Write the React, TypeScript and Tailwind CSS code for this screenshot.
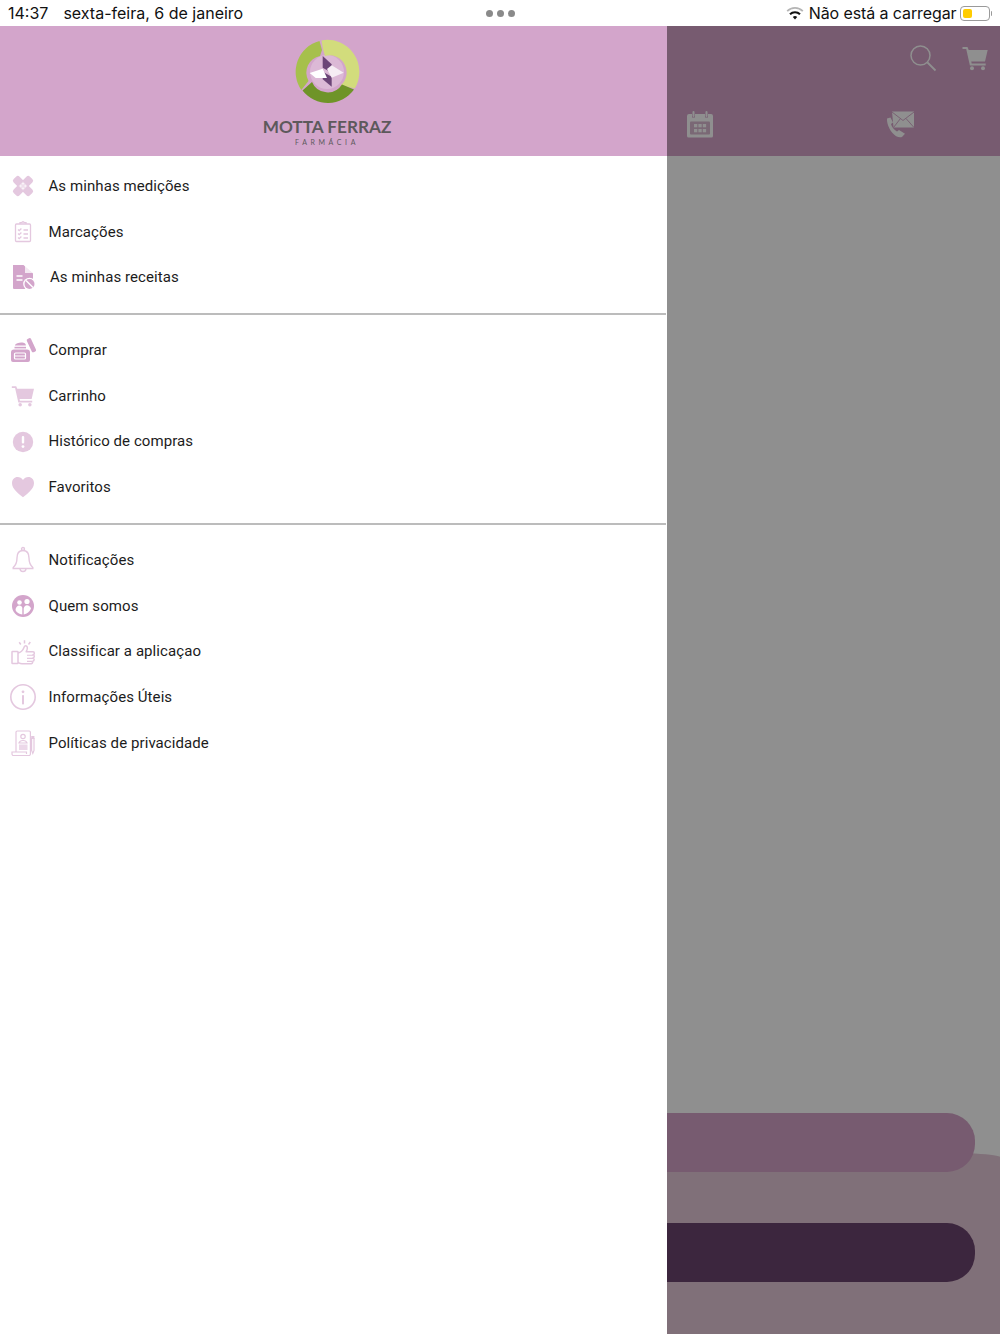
import type { ReactNode } from 'react';

const LIGHT = '#e4c8df';
const MID = '#d3a5cb';

function Icon({ children }: { children: ReactNode }) {
  return (
    <svg className="w-7 h-7 shrink-0 overflow-visible" viewBox="0 0 28 28">
      {children}
    </svg>
  );
}

const BandageIcon = () => (
  <Icon>
    <g fill={LIGHT}>
      <rect x="2.500" y="9.800" width="23" height="8.400" rx="2.500" transform="rotate(45 14 14)" />
      <rect x="2.500" y="9.800" width="23" height="8.400" rx="2.500" transform="rotate(-45 14 14)" />
    </g>
    <path d="M14 9.500l4.500 4.500-4.500 4.500-4.500-4.500z" fill="#efdfec" />
    <g fill="#fff">
      <circle cx="14" cy="11.800" r="0.800" />
      <circle cx="11.800" cy="14" r="0.800" />
      <circle cx="16.200" cy="14" r="0.800" />
      <circle cx="14" cy="16.200" r="0.800" />
    </g>
  </Icon>
);

const ClipboardIcon = () => (
  <Icon>
    <g fill="none" stroke={LIGHT} strokeWidth="1.300">
      <rect x="6.500" y="6" width="15" height="17.500" rx="1" />
      <path d="M11 6V4.600h2a1 1 0 0 1 2 0h2V6" />
      <path d="M9 11.500l1.200 1.200 2.200-2.200M9 15.500l1.200 1.200 2.200-2.200M9 19.500l1.200 1.200 2.200-2.200M14.500 12h4.500M14.500 16h4.500M14.500 20h4.500" />
    </g>
  </Icon>
);

const ReceitaIcon = () => (
  <Icon>
    <path d="M4 2h10.500L24 10.500V26H5a1 1 0 0 1-1-1z" fill={MID} />
    <path d="M16 2.500l7.500 7.500H16z" fill="#fff" opacity="0.75" />
    <path d="M7.500 13h6M7.500 17h6" stroke="#fff" strokeWidth="1.700" />
    <circle cx="20.500" cy="21" r="6.300" fill="#fff" />
    <circle cx="20.500" cy="21" r="5" fill={MID} />
    <path d="M17 17.500l7 7" stroke="#fff" strokeWidth="1.400" />
  </Icon>
);

const ComprarIcon = () => (
  <Icon>
    <path d="M6 9c1-2.500 8-3.200 10-1.500.6.500.8 1 .8 2H6z" fill={MID} />
    <rect x="5.500" y="10.800" width="11.500" height="1.600" fill={MID} />
    <path d="M2 16.500a3 3 0 0 1 3-3h13a3 3 0 0 1 3 3V24a2 2 0 0 1-2 2H4a2 2 0 0 1-2-2z" fill={MID} />
    <rect x="5.500" y="17" width="11" height="6" rx="1" fill="none" stroke="#fff" strokeWidth="1.200" />
    <path d="M6 20h10" stroke="#fff" strokeWidth="1" />
    <rect x="20" y="2" width="4.600" height="14.500" rx="1.500" transform="rotate(-25 22.300 9)" fill={MID} />
  </Icon>
);

const CartShape = ({ color }: { color: string }) => (
  <>
    <path d="M1.500 3h5l1.200 3h19l-2.700 11.500H10.300l.4 2h14v2H8.900L5.200 5H1.500z" fill={color} />
    <circle cx="11" cy="24.200" r="2" fill={color} />
    <circle cx="22" cy="24.200" r="2" fill={color} />
  </>
);

const CartIcon = () => (
  <Icon>
    <g transform="translate(1.500 1.500) scale(0.880)">
      <CartShape color={LIGHT} />
    </g>
  </Icon>
);

const AlertIcon = () => (
  <Icon>
    <circle cx="14" cy="14" r="10.200" fill={LIGHT} />
    <rect x="12.800" y="8" width="2.400" height="7.600" rx="1" fill="#fff" />
    <circle cx="14" cy="18.600" r="1.400" fill="#fff" />
  </Icon>
);

const HeartIcon = () => (
  <Icon>
    <path
      d="M14 24.300C9 20 3 15.800 3 9.900 3 6.500 5.500 4 8.600 4c2.200 0 4.200 1.100 5.400 3 1.200-1.900 3.200-3 5.400-3C22.500 4 25 6.500 25 9.900c0 5.900-6 10.100-11 14.400z"
      fill={LIGHT}
    />
  </Icon>
);

const BellIcon = () => (
  <Icon>
    <g fill="none" stroke={LIGHT} strokeWidth="1.400">
      <path d="M14 4.500c-4.500 0-6 3.500-6 7.500 0 4.500-1 7-3.800 9.500v1h19.600v-1C21 19 20 16.500 20 12c0-4-1.500-7.500-6-7.500z" />
      <circle cx="14" cy="3" r="1.500" />
      <path d="M11 22.500a3 3 0 0 0 6 0" />
    </g>
  </Icon>
);

const PeopleIcon = () => (
  <Icon>
    <circle cx="14" cy="14" r="11" fill={MID} />
    <g fill="#fff">
      <circle cx="10.500" cy="10.500" r="2.300" />
      <circle cx="18" cy="9.500" r="2.600" />
      <path d="M6.500 18c.2-3 2-4.500 3.800-4.500 1.700 0 2.800 1 3 2.600v6.400C10 22.300 7.500 20.500 6.500 18z" />
      <path d="M22 16.500c-.5-2-2.300-3.300-4-3.300-1.700 0-3 1.300-3.300 3.300v6c3.300-.5 6-2.800 7.300-6z" />
    </g>
  </Icon>
);

const ThumbIcon = () => (
  <Icon>
    <g fill="none" stroke={LIGHT} strokeWidth="1.500" strokeLinejoin="round">
      <rect x="3" y="13.500" width="6" height="12" rx="0.600" />
      <path d="M9 15c3-.5 5-3 6-5.500.4-1 .5-1.800 1.700-1.800 1.600 0 2 2 1.300 4l-.8 2H24c1.800 0 1.800 3.100 0 3.100 1.700 0 1.700 3.100 0 3.100 1.500 0 1.500 3 0 3-.2 0 0 2.800-1.800 2.800H13c-2 0-3-.8-4-1.200" />
      <path d="M18 17.300h6M18 20.400h6M18 23.400h5" strokeWidth="1.100" />
      <path d="M15.500 5.500V2.200M19.500 6.500l1.800-2.500M11.800 6.500L10.200 4.200" />
    </g>
  </Icon>
);

const InfoIcon = () => (
  <Icon>
    <circle cx="14" cy="14" r="12.200" fill="none" stroke={LIGHT} strokeWidth="1.600" />
    <circle cx="14" cy="8.800" r="1.400" fill={LIGHT} />
    <rect x="13" y="12" width="2" height="9.500" rx="0.800" fill={LIGHT} />
  </Icon>
);

const PrivacyIcon = () => (
  <Icon>
    <g fill="none" stroke={LIGHT} strokeWidth="1.200">
      <path d="M7 23V3.200A1.200 1.200 0 0 1 8.200 2h12a1.200 1.200 0 0 1 1.200 1.200V25a1.500 1.500 0 0 1-1.500 1.500H4.500A1.500 1.500 0 0 1 3 25v-2h14.500v2" />
      <circle cx="14" cy="7.500" r="2.200" />
      <path d="M10 14c.5-2 2-2.500 4-2.500s3.500.5 4 2.500z" />
      <path d="M25 9.500v12l-1.200 3-1.200-3v-12z" />
    </g>
    <g fill={LIGHT}>
      <rect x="10" y="15.500" width="8.500" height="5.500" opacity="0.700" />
      <rect x="22.200" y="7" width="3.200" height="3" />
    </g>
  </Icon>
);

const SECTIONS: { icon: ReactNode; label: string; indent?: boolean }[][] = [
  [
    { icon: <BandageIcon />, label: 'As minhas medições' },
    { icon: <ClipboardIcon />, label: 'Marcações' },
    { icon: <ReceitaIcon />, label: 'As minhas receitas', indent: true },
  ],
  [
    { icon: <ComprarIcon />, label: 'Comprar' },
    { icon: <CartIcon />, label: 'Carrinho' },
    { icon: <AlertIcon />, label: 'Histórico de compras' },
    { icon: <HeartIcon />, label: 'Favoritos' },
  ],
  [
    { icon: <BellIcon />, label: 'Notificações' },
    { icon: <PeopleIcon />, label: 'Quem somos' },
    { icon: <ThumbIcon />, label: 'Classificar a aplicaçao' },
    { icon: <InfoIcon />, label: 'Informações Úteis' },
    { icon: <PrivacyIcon />, label: 'Políticas de privacidade' },
  ],
];

function Logo() {
  return (
    <div className="flex flex-col items-center">
      <svg className="w-[68px] h-[68px] mt-[12px]" viewBox="0 0 68 68">
        <circle cx="34" cy="34" r="17" fill="#dcb9d6" />
        {/* pale right segment */}
        <path d="M28.500 2.400A32 32 0 0 1 61.700 50.500L48 47A17 17 0 0 0 32 18L30 11.500z" fill="#d2dc7c" />
        {/* mid left segment */}
        <path d="M26.500 2.900A32 32 0 0 0 8.300 52L15.500 43A17 17 0 0 1 27 18L29 12z" fill="#a6c04c" />
        {/* dark bottom segment */}
        <path d="M9.500 52.500A32 32 0 0 0 61 51.500L49 46.500A17 17 0 0 1 19 44z" fill="#6f9428" />
        {/* pinwheel */}
        <path d="M29.700 18l9 8.300v8.400l-9-5z" fill="#6c4577" />
        <path d="M29.700 33.700l9 5v10l-9-7.400z" fill="#6c4577" />
        <path d="M16.700 35l13-4.300L34 40H22.700z" fill="#fff" />
        <path d="M38.700 27.300l12 7.400-12 5L34 31z" fill="#f6edf4" />
      </svg>
      <span className="mt-[11px] text-[17.200px] leading-[20px] font-bold text-[#5d595c] font-['Lato',sans-serif]">
        MOTTA FERRAZ
      </span>
      <span className="mt-[1px] text-[7px] leading-[9px] tracking-[3.600px] text-[#5d595c] font-['Lato',sans-serif]">
        FARMÁCIA
      </span>
    </div>
  );
}

export default function App() {
  return (
    <div className="w-[1000px] h-[1334px] flex flex-col bg-white font-['Roboto',sans-serif] overflow-hidden">
      {/* Status bar */}
      <div className="h-[26px] shrink-0 grid grid-cols-3 items-center px-2 text-[16px] text-[#111] font-['Inter',sans-serif]">
        <div className="flex gap-[15px] whitespace-nowrap">
          <span>14:37</span>
          <span>sexta-feira, 6 de janeiro</span>
        </div>
        <div className="flex justify-center gap-[4px]">
          <span className="w-[7px] h-[7px] rounded-full bg-[#8a8a8a]" />
          <span className="w-[7px] h-[7px] rounded-full bg-[#8a8a8a]" />
          <span className="w-[7px] h-[7px] rounded-full bg-[#8a8a8a]" />
        </div>
        <div className="flex justify-end items-center whitespace-nowrap">
          <svg className="w-[18px] h-[14px] mr-[5px]" viewBox="0 0 18 14" fill="none">
            <path d="M1.200 5.200a11 11 0 0 1 15.600 0" stroke="#b5b5b5" strokeWidth="1.800" />
            <path d="M4 8.300a7 7 0 0 1 10 0" stroke="#111" strokeWidth="2" />
            <path d="M6.800 11a3.200 3.200 0 0 1 4.400 0L9 13.500z" fill="#111" />
          </svg>
          <span className="tracking-[-0.100px]">Não está a carregar</span>
          <div className="ml-[3px] w-[30px] h-[15px] rounded-[4px] border border-[#9a9a9a] p-[2px]">
            <div className="w-[9px] h-full rounded-[2px] bg-[#ffcc00]" />
          </div>
          <div className="ml-[1px] w-[1.500px] h-[5px] rounded-r bg-[#9a9a9a]" />
        </div>
      </div>

      <div className="flex-1 flex min-h-0">
        {/* Drawer */}
        <div className="w-[667px] shrink-0 flex flex-col bg-white">
          <div className="h-[130px] shrink-0 bg-[#d3a5cb] flex justify-center pr-[13px]">
            <Logo />
          </div>
          {SECTIONS.map((items, i) => (
            <div
              key={i}
              className={
                i === 0
                  ? 'mr-[1px] pt-[7px] pb-[13.200px] border-b-2 border-[#bcbcbc]'
                  : i === 1
                    ? 'mr-[1px] pt-[12.200px] pb-[13px] border-b-2 border-[#bcbcbc]'
                    : 'pt-[12.600px]'
              }
            >
              {items.map((item) => (
                <div key={item.label} className="h-[45.600px] flex items-center pl-[9px] pt-[1px]">
                  {item.icon}
                  <span
                    className={
                      item.indent
                        ? 'ml-[13px] text-[15px] tracking-[0.080px] text-[#1c1c1c]'
                        : 'ml-[11.500px] text-[15px] tracking-[0.080px] text-[#1c1c1c]'
                    }
                  >
                    {item.label}
                  </span>
                </div>
              ))}
            </div>
          ))}
        </div>

        {/* Dimmed page behind the drawer */}
        <div className="relative flex-1 flex flex-col bg-[#8f8f8f]">
          <div className="h-[130px] shrink-0 bg-[#775b70] flex flex-col">
            <div className="flex justify-end items-center gap-[24px] pt-[18px] pr-[11px]">
              <svg className="w-7 h-7" viewBox="0 0 28 28" fill="none" stroke="#8f8f8f">
                <circle cx="11.500" cy="11.500" r="9.500" strokeWidth="1.500" />
                <path d="M18.500 18.500l8 8" strokeWidth="1.800" />
              </svg>
              <svg className="w-7 h-7" viewBox="0 0 28 28">
                <CartShape color="#8f8f8f" />
              </svg>
            </div>
            <div className="flex items-center gap-[172px] pl-[19px] pt-[38px]">
              <svg className="w-[28px] h-[28px]" viewBox="0 0 28 28" fill="#8f8f8f">
                <path d="M1 6a2 2 0 0 1 2-2h3v3.500h3V4h10v3.500h3V4h3a2 2 0 0 1 2 2v20a1.500 1.500 0 0 1-1.500 1.500h-23A1.500 1.500 0 0 1 1 26z" />
                <rect x="6.500" y="1" width="2" height="6" rx="1" />
                <rect x="19.500" y="1" width="2" height="6" rx="1" />
                <rect x="4" y="11.500" width="20" height="13" rx="1" fill="#7a6875" />
                <rect x="8" y="14" width="3.300" height="3.300" />
                <rect x="12.400" y="14" width="3.300" height="3.300" />
                <rect x="16.800" y="14" width="3.300" height="3.300" />
                <rect x="8" y="19" width="3.300" height="3.300" />
                <rect x="12.400" y="19" width="3.300" height="3.300" />
                <rect x="16.800" y="19" width="3.300" height="3.300" />
              </svg>
              <svg className="w-[28px] h-[28px]" viewBox="0 0 28 28" fill="#8f8f8f">
                <path d="M6 1.500h22v16H7.500z" />
                <path d="M6 2l11 8.500L28 2M7.500 17.500l7-9M28 17.500l-8-9" fill="none" stroke="#775b70" strokeWidth="0.900" />
                <path d="M1 8.500l3.500-1 2.500 5-2 1.500c.8 3 3 6 6 7.500l2-1.500 6 3.800-2.800 3c-1.500 1-4 .5-6-.5C5 23 .5 15 1 8.500z" />
              </svg>
            </div>
          </div>

          {/* Curved band behind the buttons */}
          <div className="absolute left-0 right-0 bottom-0 h-[186px] bg-[#807079] rounded-tr-[100%_9px]" />

          <div className="relative mt-auto flex flex-col gap-[51px] pb-[52px] pr-[25px]">
            <div className="h-[59px] bg-[#775b70] rounded-r-[28px]" />
            <div className="h-[59px] bg-[#3c263e] rounded-r-[28px]" />
          </div>
        </div>
      </div>
    </div>
  );
}
